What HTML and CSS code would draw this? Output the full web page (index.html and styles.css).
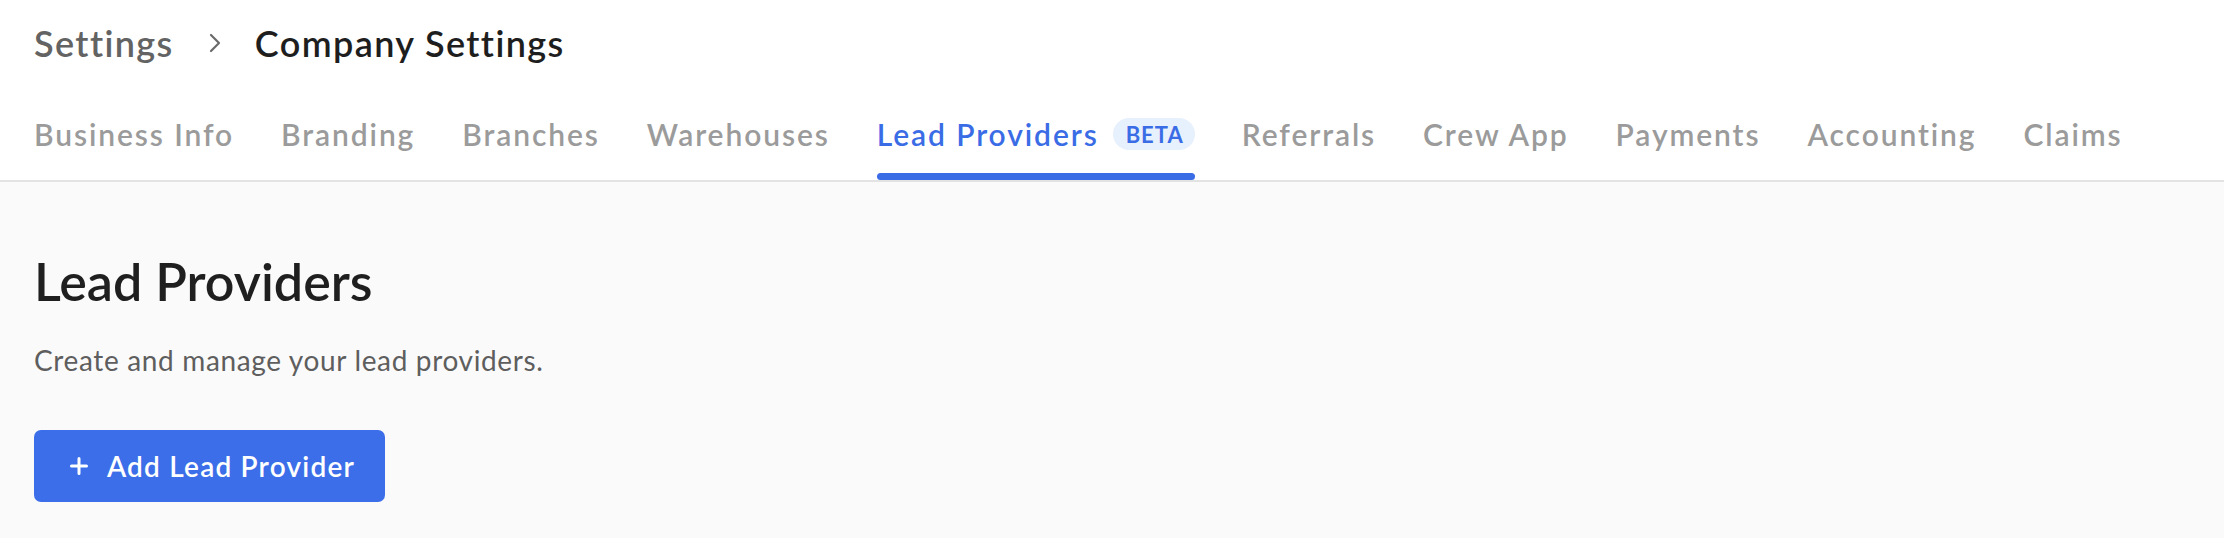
FILE: index.html
```html
<!DOCTYPE html>
<html lang="en">
<head>
<meta charset="utf-8">
<title>Company Settings - Lead Providers</title>
<link rel="stylesheet" href="styles.css">
</head>
<body>
<header class="header">
  <nav class="breadcrumb">
    <span class="crumb">Settings</span>
    <svg class="chevron" viewBox="0 0 12 20" width="12" height="20" aria-hidden="true"><path d="M2 2 L10 10 L2 18" fill="none" stroke="#6a6a6a" stroke-width="2.2" stroke-linecap="round" stroke-linejoin="round"/></svg>
    <span class="crumb current">Company Settings</span>
  </nav>
  <div class="tabs">
    <div class="tab"><span class="tab-label">Business Info</span><span class="tab-bar"></span></div>
    <div class="tab"><span class="tab-label">Branding</span><span class="tab-bar"></span></div>
    <div class="tab"><span class="tab-label">Branches</span><span class="tab-bar"></span></div>
    <div class="tab"><span class="tab-label">Warehouses</span><span class="tab-bar"></span></div>
    <div class="tab active"><span class="tab-label">Lead Providers <span class="badge">BETA</span></span><span class="tab-bar"></span></div>
    <div class="tab"><span class="tab-label">Referrals</span><span class="tab-bar"></span></div>
    <div class="tab"><span class="tab-label">Crew App</span><span class="tab-bar"></span></div>
    <div class="tab"><span class="tab-label">Payments</span><span class="tab-bar"></span></div>
    <div class="tab"><span class="tab-label">Accounting</span><span class="tab-bar"></span></div>
    <div class="tab"><span class="tab-label">Claims</span><span class="tab-bar"></span></div>
  </div>
</header>
<main class="content">
  <h1 class="title">Lead Providers</h1>
  <p class="subtitle">Create and manage your lead providers.</p>
  <button class="btn-primary" type="button">
    <svg class="plus" viewBox="0 0 18 18" width="18" height="18" aria-hidden="true"><path d="M9 1.5 V16.5 M1.5 9 H16.5" stroke="#fff" stroke-width="3" stroke-linecap="round"/></svg>
    <span class="btn-label">Add Lead Provider</span>
  </button>
</main>
</body>
</html>
```
FILE: styles.css
```css
html, body {
  margin: 0;
  padding: 0;
}
body {
  font-family: "Lato", "Noto Sans", sans-serif;
  background: #fafafa;
  min-height: 538px;
}
.header {
  background: #ffffff;
  border-bottom: 2px solid #e3e3e3;
  padding: 21px 34px 0;
}
.breadcrumb {
  display: flex;
  align-items: center;
  height: 44px;
  font-size: 36px;
  font-weight: 600;
  letter-spacing: 1.4px;
}
.crumb {
  color: #636363;
}
.crumb.current {
  color: #1e1e1e;
}
.chevron {
  display: block;
  margin: 0 34px 0 35px;
}
.tabs {
  display: flex;
  gap: 47px;
  margin-top: 49px;
}
.tab {
  display: flex;
  flex-direction: column;
  color: #9b9b9b;
  font-size: 30px;
  font-weight: 600;
  letter-spacing: 1.9px;
}
.tab-label {
  display: flex;
  align-items: center;
  height: 40px;
  gap: 14px;
  white-space: nowrap;
}
.tab-bar {
  height: 7px;
  margin-top: 19px;
  border-radius: 4px;
  background: transparent;
}
.tab.active {
  color: #3a6ce6;
}
.tab.active .tab-bar {
  background: #3a6ce6;
}
.badge {
  display: inline-flex;
  align-items: center;
  justify-content: center;
  height: 32px;
  padding: 0 11px 0 13px;
  border-radius: 16px;
  background: #e7f0fd;
  color: #3a6ce6;
  font-size: 22px;
  font-weight: 700;
  letter-spacing: 1px;
}
.content {
  padding: 67px 34px 36px;
  background: #fafafa;
}
.title {
  margin: 0;
  font-size: 52px;
  line-height: 64px;
  font-weight: 600;
  letter-spacing: 0;
  color: #1f1f1f;
}
.subtitle {
  margin: 27px 0 0;
  font-size: 28px;
  line-height: 40px;
  font-weight: 400;
  letter-spacing: 0.65px;
  color: #5e5e5e;
}
.btn-primary {
  margin-top: 50px;
  display: inline-flex;
  align-items: center;
  gap: 19px;
  height: 72px;
  width: 351px;
  padding: 0 0 0 36px;
  border: none;
  border-radius: 7px;
  background: #3b6ee8;
  color: #ffffff;
  font-family: inherit;
  font-size: 28px;
  font-weight: 600;
  letter-spacing: 1.2px;
  cursor: pointer;
}
.plus {
  display: block;
  flex: none;
}
```
